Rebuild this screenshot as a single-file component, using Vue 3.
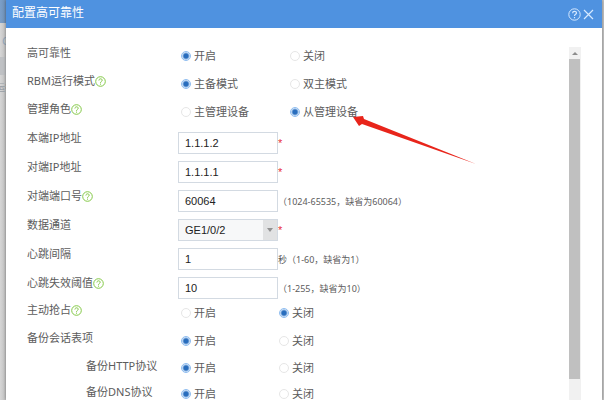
<template>
  <div class="page">
    <div class="backdrop" aria-hidden="true">
      <span class="behind-top"></span>
      <span class="behind-icon">C</span>
      <span class="behind-band"></span>
      <span class="behind-text">运行</span>
    </div>

    <section class="dialog" role="dialog" aria-labelledby="dialog-title">
      <header class="header">
        <h1 id="dialog-title" class="title">配置高可靠性</h1>
        <button type="button" class="icon-btn" aria-label="帮助">
          <svg width="13" height="13" viewBox="0 0 13 13" fill="none" stroke="currentColor">
            <circle cx="6.5" cy="6.5" r="5.7" />
            <path d="M4.6 5.2C4.6 2.8 8.5 2.8 8.5 5.1C8.5 6.4 6.5 6.3 6.5 8M6.5 9V10.2" stroke-width="1.2" />
          </svg>
        </button>
        <button type="button" class="icon-btn" aria-label="关闭">
          <svg width="11" height="11" viewBox="0 0 11 11" stroke="currentColor" stroke-width="1.2">
            <path d="M1 1L10 10M10 1L1 10" />
          </svg>
        </button>
      </header>

      <div class="body">
        <form class="form" @submit.prevent>
          <div
            v-for="(group, i) in groups"
            :key="i"
            class="group"
            :class="group.type"
          >
            <div
              v-for="row in group.rows"
              :key="row.id"
              class="row"
              :class="{ nested: row.nested }"
              :role="row.options ? 'radiogroup' : null"
              :aria-labelledby="row.options ? `${row.id}-label` : null"
            >
              <component
                :is="row.options ? 'span' : 'label'"
                :id="`${row.id}-label`"
                class="label"
                :for="row.options ? null : row.id"
              >
                {{ row.label }}
                <svg v-if="row.help" class="help" viewBox="0 0 11 11" fill="none" stroke="currentColor">
                  <circle cx="5.5" cy="5.5" r="4.8" />
                  <path d="M3.9 4.5C3.9 2.3 7.2 2.3 7.2 4.3C7.2 5.5 5.5 5.4 5.5 6.8M5.5 7.6V8.7" />
                </svg>
              </component>

              <div v-if="row.options" class="options">
                <label v-for="option in row.options" :key="option" class="option">
                  <input v-model="form[row.id]" type="radio" :name="row.id" :value="option" />
                  {{ option }}
                </label>
              </div>

              <div v-else class="control">
                <div v-if="row.select" class="select">
                  <select :id="row.id" v-model="form[row.id]">
                    <option>GE1/0/2</option>
                  </select>
                  <span class="caret" aria-hidden="true"></span>
                </div>
                <input v-else :id="row.id" v-model="form[row.id]" class="input" type="text" />
                <span v-if="row.required" class="req" aria-hidden="true">*</span>
                <span v-if="row.hint" class="hint">{{ row.hint }}</span>
              </div>
            </div>
          </div>
        </form>

        <div class="scrollbar" aria-hidden="true">
          <span class="scroll-up"></span>
          <span class="thumb"></span>
          <span class="track"></span>
        </div>
      </div>
    </section>

    <svg class="pointer" viewBox="0 0 123 49" aria-hidden="true">
      <path d="M0 1L10 0L11 3L123 48L9 8L6 10Z" fill="#e8251b" />
    </svg>
  </div>
</template>

<script setup>
import { reactive } from 'vue';

const onOff = ['开启', '关闭'];

const form = reactive({
  ha: '开启',
  mode: '主备模式',
  role: '从管理设备',
  localIp: '1.1.1.2',
  peerIp: '1.1.1.1',
  port: '60064',
  channel: 'GE1/0/2',
  interval: '1',
  threshold: '10',
  preempt: '关闭',
  session: '开启',
  http: '开启',
  dns: '开启'
});

const groups = [
  {
    type: 'wide',
    rows: [
      { id: 'ha', label: '高可靠性', options: onOff },
      { id: 'mode', label: 'RBM运行模式', help: true, options: ['主备模式', '双主模式'] },
      { id: 'role', label: '管理角色', help: true, options: ['主管理设备', '从管理设备'] }
    ]
  },
  {
    type: 'fields',
    rows: [
      { id: 'localIp', label: '本端IP地址', required: true },
      { id: 'peerIp', label: '对端IP地址', required: true },
      { id: 'port', label: '对端端口号', help: true, hint: '（1024-65535，缺省为60064）' },
      { id: 'channel', label: '数据通道', select: true, required: true },
      { id: 'interval', label: '心跳间隔', hint: '秒（1-60，缺省为1）' },
      { id: 'threshold', label: '心跳失效阈值', help: true, hint: '（1-255，缺省为10）' }
    ]
  },
  {
    type: 'switches',
    rows: [
      { id: 'preempt', label: '主动抢占', help: true, options: onOff },
      { id: 'session', label: '备份会话表项', options: onOff },
      { id: 'http', label: '备份HTTP协议', nested: true, options: onOff },
      { id: 'dns', label: '备份DNS协议', nested: true, options: onOff }
    ]
  }
];
</script>

<style>
body {
  margin: 0;
}
</style>

<style scoped>
.page {
  position: relative;
  display: grid;
  grid-template-columns: 6px minmax(0, 1fr);
  height: 100vh;
  padding-right: 2px;
  box-sizing: border-box;
  overflow: hidden;
  background: #c4c4c4;
  font-family: "Noto Sans", "Noto Sans CJK SC", sans-serif;
  font-size: 11px;
  color: #5c5c5c;
}

.backdrop {
  display: flex;
  flex-direction: column;
  overflow: hidden;
  background: linear-gradient(to right, #d6d6d6, #c0c0c0);
  color: #9a9fa5;
  white-space: nowrap;
}

.behind-top {
  flex: none;
  height: 23px;
  background: linear-gradient(to right, #7b9fc8, #7090b5);
}

.behind-icon {
  padding: 10px 0 0 2px;
  line-height: 16px;
  color: #94a9bd;
}

.behind-band {
  flex: none;
  height: 18px;
  margin-top: 8px;
  background: #bfc1c4;
}

.behind-text {
  margin-top: 5px;
  margin-left: -4px;
  font-size: 9px;
  line-height: 16px;
}

.dialog {
  display: flex;
  flex-direction: column;
  min-width: 0;
  min-height: 0;
  background: #fff;
  box-shadow: 0 0 3px rgba(0, 0, 0, 0.4);
}

.header {
  flex: none;
  display: flex;
  align-items: center;
  gap: 2px;
  height: 28px;
  padding: 0 8px 0 6px;
  box-sizing: border-box;
  background: #4f92e0;
  color: #fff;
}

.title {
  flex: 1;
  margin: 0;
  padding-bottom: 2px;
  font-size: 12px;
  font-weight: 400;
  line-height: 16px;
}

.icon-btn {
  display: flex;
  padding: 0;
  border: 0;
  background: none;
  color: #d6e9ff;
}

.body {
  flex: 1;
  display: flex;
  min-height: 0;
  overflow: hidden;
}

.form {
  flex: 1;
  min-width: 0;
  padding: 14px 0 0 21px;
}

.group {
  display: flex;
  flex-direction: column;
}

.row {
  display: flex;
  align-items: flex-start;
  height: 28px;
}

.row.nested {
  height: 26px;
}

.label {
  flex: none;
  display: flex;
  align-items: center;
  width: 151px;
  line-height: 22px;
}

.nested .label {
  box-sizing: border-box;
  padding-left: 59px;
}

.help {
  width: 11px;
  height: 11px;
  color: #83c846;
}

.fields {
  gap: 7px;
  margin-top: 6px;
}

.fields .row {
  height: 22px;
}

.fields .label {
  line-height: 12px;
}

.options {
  display: flex;
  align-items: center;
  height: 100%;
}

.option {
  display: flex;
  align-items: center;
  gap: 3px;
  width: 98px;
  padding-left: 3px;
  box-sizing: border-box;
  line-height: 12px;
  white-space: nowrap;
}

.wide .option {
  width: 109px;
}

.option input {
  appearance: none;
  width: 10px;
  height: 10px;
  margin: 0;
  box-sizing: border-box;
  border: 1px solid #e6e6e6;
  border-radius: 50%;
  background: #fff;
}

.option input:checked {
  border-color: #8fbdf0;
  background: radial-gradient(circle, #286dbd 0 2px, #e4f1ff 4px);
}

.control {
  display: flex;
  align-items: center;
  height: 22px;
}

.input,
.select select {
  width: 100px;
  height: 22px;
  padding: 0 6px;
  box-sizing: border-box;
  border: 1px solid #d3dae2;
  border-radius: 0;
  background: #fff;
  font-family: "Liberation Sans", sans-serif;
  font-size: 11px;
  color: #222;
}

.select {
  position: relative;
}

.select select {
  display: block;
  appearance: none;
  background: #f7f8f9;
}

.caret {
  position: absolute;
  top: 1px;
  right: 1px;
  bottom: 1px;
  display: grid;
  place-items: center;
  width: 14px;
  background: #e1e2e3;
  pointer-events: none;
}

.caret::before {
  content: "";
  border: 3px solid transparent;
  border-top: 4px solid #929292;
  border-bottom: 0;
}

.req {
  font-family: "Liberation Sans", sans-serif;
  font-size: 11px;
  line-height: 12px;
  color: #e8303a;
}

.hint {
  font-size: 9px;
  white-space: nowrap;
}

.scrollbar {
  flex: none;
  display: flex;
  flex-direction: column;
  width: 12px;
  margin: 19px 21px 0 0;
  background: #f1f1f1;
}

.scroll-up {
  display: grid;
  place-items: center;
  height: 12px;
}

.scroll-up::before {
  content: "";
  border: 3px solid transparent;
  border-bottom: 3px solid #8c8c8c;
  border-top: 0;
}

.thumb {
  flex: 1;
  margin: 0 1px 0 0;
  background: #c0c0c0;
}

.track {
  height: 21px;
}

/* annotation arrow lying over the form */
.pointer {
  position: absolute;
  top: 116px;
  left: 353px;
  width: 123px;
  height: 49px;
  pointer-events: none;
}
</style>
